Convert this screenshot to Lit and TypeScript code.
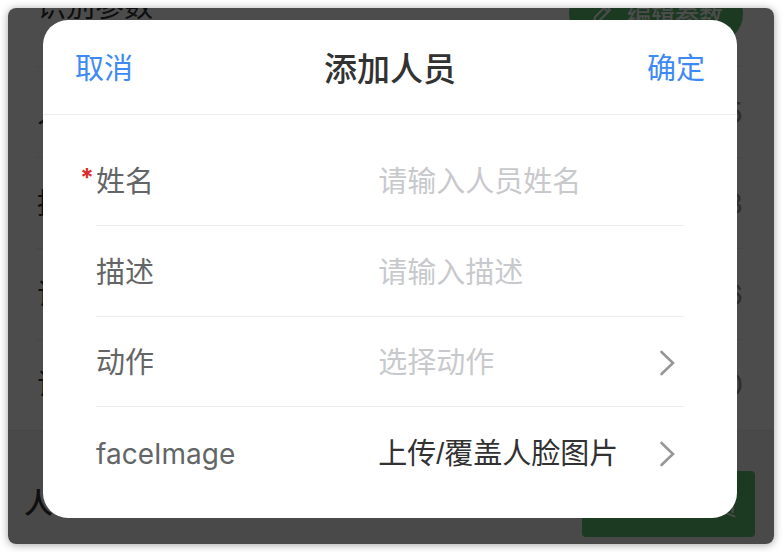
import { LitElement, html, css } from "lit";
import { customElement, state } from "lit/decorators.js";
import { classMap } from "lit/directives/class-map.js";

const chevron = html`<svg class="chevron" viewBox="0 0 24 28" aria-hidden="true">
  <path d="M6.5 3 L18 14 L6.5 25" />
</svg>`;

@customElement("settings-page")
class SettingsPage extends LitElement {
  static styles = css`
    :host {
      display: flex;
      flex-direction: column;
      overflow: hidden;
      background: #fff;
      color: #323233;
      font-size: 29px;
      line-height: 40px;
    }
    .list {
      margin-top: -46px;
      padding: 0 31px 0 29px;
    }
    .head,
    .row {
      display: flex;
      align-items: center;
      justify-content: space-between;
      box-sizing: border-box;
      border-bottom: 1px solid #ebedf0;
    }
    .head {
      height: 105px;
    }
    .row {
      height: 91px;
      padding-top: 2px;
    }
    .row:last-child {
      height: 90px;
      padding-top: 0;
      border-bottom: 0;
    }
    .title {
      padding-bottom: 14px;
    }
    .value {
      color: #969799;
    }
    button {
      display: flex;
      align-items: center;
      border: 0;
      background: #5dc171;
      color: #fff;
      font-family: inherit;
    }
    .edit {
      gap: 14px;
      height: 58px;
      padding: 0 20px 0 22px;
      border-radius: 29px;
      font-size: 24px;
      font-weight: 500;
    }
    .pen {
      width: 22px;
      height: 22px;
      fill: none;
      stroke: #fff;
      stroke-width: 2;
      stroke-linejoin: round;
    }
    .foot {
      flex: 1;
      display: flex;
      align-items: flex-start;
      justify-content: space-between;
      padding: 40px 19px 0 16px;
      border-top: 1px solid #ebedf0;
      background: #f5f5f5;
    }
    .group {
      font-weight: 500;
      line-height: 66px;
    }
    .add {
      justify-content: flex-end;
      width: 173px;
      height: 66px;
      padding: 0 18px;
      border-radius: 4px;
      font-size: 24px;
    }
  `;

  private rows = [
    ["人", "5"],
    ["提", "8"],
    ["识", "6"],
    ["识", "0"],
  ];

  render() {
    return html`
      <div class="list">
        <div class="head">
          <span class="title">识别参数</span>
          <button class="edit" type="button">
            <svg class="pen" viewBox="0 0 22 22" aria-hidden="true">
              <path d="M3 20 L4 14 L15 3 L19 7 L8 18 Z M13 5 L17 9" />
            </svg>
            编辑参数
          </button>
        </div>
        ${this.rows.map(
          ([label, value]) => html`<div class="row">
            <span>${label}</span><span class="value">${value}</span>
          </div>`
        )}
      </div>
      <div class="foot">
        <span class="group">人</span>
        <button class="add" type="button">添加人员</button>
      </div>
    `;
  }
}

@customElement("person-dialog")
class PersonDialog extends LitElement {
  static styles = css`
    :host {
      display: block;
      overflow: hidden;
      border-radius: 25px;
      background: #fff;
      color: #323233;
      font-size: 29px;
      line-height: 40px;
    }
    .bar {
      display: flex;
      align-items: center;
      justify-content: space-between;
      box-sizing: border-box;
      height: 95px;
      padding: 3px 32px 0;
      border-bottom: 1px solid #ebedf0;
    }
    h1 {
      margin: 0;
      font-size: 33px;
      font-weight: 500;
    }
    button,
    input,
    select {
      margin: 0;
      padding: 0;
      border: 0;
      outline: 0;
      background: none;
      color: inherit;
      font: inherit;
      text-align: left;
    }
    .action {
      color: #3d8af5;
    }
    .fields {
      padding: 20px 53px 20px;
    }
    .field {
      display: grid;
      grid-template-columns: 12fr 13fr;
      align-items: center;
      box-sizing: border-box;
      height: 91px;
      padding-top: 3px;
      border-bottom: 1px solid #ebedf0;
    }
    .field.link {
      height: 90px;
      padding-top: 2px;
    }
    .field:last-child {
      height: 91px;
      border-bottom: 0;
    }
    label {
      position: relative;
      color: #646566;
    }
    .latin {
      font-size: 28px;
    }
    .required::before {
      content: "*";
      position: absolute;
      left: -16px;
      color: #dd2c2c;
      font-size: 25px;
      font-weight: 700;
      line-height: 32px;
    }
    .control {
      display: flex;
      align-items: center;
      min-width: 0;
    }
    input,
    select,
    .upload {
      flex: 1;
      width: 100%;
      min-width: 0;
      height: 40px;
      white-space: nowrap;
    }
    .upload {
      font-family: "Liberation Sans", "Noto Sans CJK SC", sans-serif;
    }
    input::placeholder {
      color: #c8c9cc;
      opacity: 1;
    }
    select {
      appearance: none;
    }
    .empty {
      color: #c8c9cc;
    }
    .chevron {
      flex: none;
      width: 24px;
      height: 28px;
      margin-right: 5px;
      fill: none;
      stroke: #969799;
      stroke-width: 2.6;
      stroke-linecap: round;
      stroke-linejoin: miter;
    }
  `;

  @state() private action = "";

  render() {
    return html`
      <header class="bar">
        <button class="action" type="button">取消</button>
        <h1>添加人员</h1>
        <button class="action" type="submit" form="person">确定</button>
      </header>
      <form class="fields" id="person">
        <div class="field">
          <label class="required" for="name">姓名</label>
          <div class="control"><input id="name" placeholder="请输入人员姓名" /></div>
        </div>
        <div class="field">
          <label for="desc">描述</label>
          <div class="control"><input id="desc" placeholder="请输入描述" /></div>
        </div>
        <div class="field link">
          <label for="act">动作</label>
          <div class="control">
            <select
              id="act"
              class=${classMap({ empty: !this.action })}
              @change=${(e: Event) => (this.action = (e.target as HTMLSelectElement).value)}
            >
              <option value="">选择动作</option>
            </select>
            ${chevron}
          </div>
        </div>
        <div class="field link">
          <label class="latin" for="face">faceImage</label>
          <div class="control">
            <button id="face" class="upload" type="button">上传/覆盖人脸图片</button>
            ${chevron}
          </div>
        </div>
      </form>
    `;
  }
}

@customElement("app-root")
class AppRoot extends LitElement {
  static styles = css`
    :host {
      display: block;
      padding: 8px;
      background: #fff;
      font-family: Inter, "Noto Sans CJK SC", sans-serif;
    }
    .frame {
      display: grid;
      overflow: hidden;
      border-radius: 8px;
      box-shadow: 0 1px 8px rgba(0, 0, 0, 0.36);
    }
    .page,
    .overlay {
      grid-area: 1 / 1;
      min-width: 0;
    }
    .overlay {
      z-index: 1;
      padding: 12px 37px 26px 35px;
      background: rgba(0, 0, 0, 0.7);
    }
  `;

  render() {
    return html`
      <div class="frame">
        <settings-page class="page" inert></settings-page>
        <div class="overlay">
          <person-dialog role="dialog" aria-modal="true" aria-label="添加人员"></person-dialog>
        </div>
      </div>
    `;
  }
}
